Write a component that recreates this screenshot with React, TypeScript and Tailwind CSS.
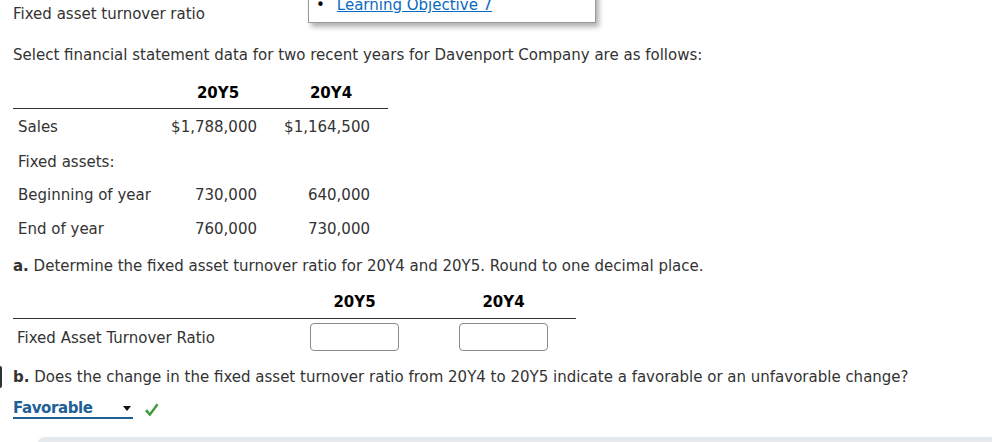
import React from "react";

const font = { fontFamily: '"DejaVu Sans", Verdana, sans-serif' };

function Dataset() {
  const rows: [string, string, string, string][] = [
    ["Sales", "$1,788,000", "$1,164,500", "h-[36px]"],
    ["Fixed assets:", "", "", "h-[33px]"],
    ["Beginning of year", "730,000", "640,000", "h-[34px]"],
    ["End of year", "760,000", "730,000", "h-[33px]"],
  ];
  return (
    <div className="ml-[13px] mt-[20px] w-[375px] text-[15px] leading-[18px]">
      <div className="flex border-b border-[#333] pb-[6px] font-bold text-black">
        <div className="w-[152px]"></div>
        <div className="w-[97px] pl-[9px] text-center">20Y5</div>
        <div className="w-[126px] pl-[12px] text-center">20Y4</div>
      </div>
      {rows.map((r, i) => (
        <div key={i} className={`flex items-center ${r[3]}`}>
          <div className="w-[152px] pl-[5px]">{r[0]}</div>
          <div className="w-[97px] pr-[5px] text-right">{r[1]}</div>
          <div className="w-[126px] pr-[18px] text-right">{r[2]}</div>
        </div>
      ))}
    </div>
  );
}

export default function App() {
  return (
    <div className="relative w-[992px] h-[442px] overflow-hidden bg-white text-[#333] text-[15px] leading-[18px]" style={font}>
      {/* learning objective popup */}
      <div className="absolute left-[308px] top-[-10px] w-[288px] h-[33px] bg-white border border-[#999] shadow-[3px_4px_5px_rgba(0,0,0,0.3)]">
        <div className="flex items-center mt-[5px] ml-[7px]">
          <span className="text-black mr-[12px]">•</span>
          <span className="text-[#0a6ac2] underline">Learning Objective 7</span>
        </div>
      </div>

      <div className="pt-[5px] pl-[13px]">Fixed asset turnover ratio</div>

      <div className="mt-[23px] pl-[13px]">
        Select financial statement data for two recent years for Davenport Company are as follows:
      </div>

      <Dataset />

      <div className="pl-[13px] mt-[12px]">
        <span className="font-bold">a.</span> Determine the fixed asset turnover ratio for 20Y4 and 20Y5. Round to one decimal place.
      </div>

      <div className="ml-[13px] mt-[18px] w-[563px]">
        <div className="flex border-b border-[#333] pb-[7px] font-bold text-black">
          <div className="w-[297px]"></div>
          <div className="w-[89px] text-center">20Y5</div>
          <div className="w-[60px]"></div>
          <div className="w-[89px] text-center">20Y4</div>
        </div>
        <div className="flex items-center mt-[4px]">
          <div className="w-[297px] pl-[4px] pt-[1px]">Fixed Asset Turnover Ratio</div>
          <input className="w-[89px] h-[28px] border border-[#8a8a8a] rounded-[4px] bg-white" />
          <div className="w-[60px]"></div>
          <input className="w-[89px] h-[28px] border border-[#8a8a8a] rounded-[4px] bg-white" />
        </div>
      </div>

      <div className="relative mt-[17px] pl-[13px]">
        <div className="absolute left-[-2px] top-[-2px] w-[4px] h-[22px] rounded-[2px] bg-[#333]"></div>
        <span className="font-bold">b.</span> Does the change in the fixed asset turnover ratio from 20Y4 to 20Y5 indicate a favorable or an unfavorable change?
      </div>

      <div className="flex items-center ml-[13px] mt-[14px]">
        <div className="flex items-center justify-between w-[120px] h-[19px] border-b-[2px] border-[#1e6096] pr-[2px]">
          <span className="text-[15px] font-bold text-[#1e6096] leading-none tracking-[-0.4px]">Favorable</span>
          <svg width="8" height="6" viewBox="0 0 8 6"><path d="M0 0 L8 0 L4 5 Z" fill="#111" /></svg>
        </div>
        <svg className="ml-[11px]" width="15" height="14" viewBox="0 0 16 15">
          <path d="M1 8.5 L3.6 6.8 L6 10.5 L13.5 0.5 L15.5 2.2 L6.3 14.5 Z" fill="#3e9b3e" />
        </svg>
      </div>

      <div className="absolute left-[38px] top-[437px] w-[960px] h-[20px] rounded-tl-[6px] bg-[#e6e9ec]"></div>
    </div>
  );
}
